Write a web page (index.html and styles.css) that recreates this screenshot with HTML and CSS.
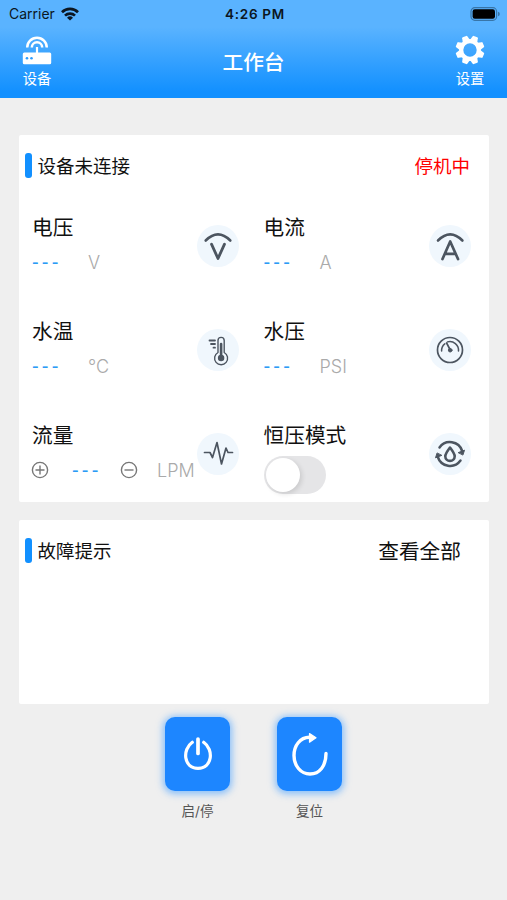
FILE: index.html
```html
<!DOCTYPE html>
<html lang="zh-CN">
<head>
    <meta charset="UTF-8">
    <meta name="viewport" content="width=device-width, initial-scale=1.0">
    <title>工作台</title>
    <link rel="stylesheet" href="styles.css">
</head>
<body>
    <header class="header">
        <div class="status-bar">
            <div class="carrier">
                <span>Carrier</span>
                <svg width="18" height="14" viewBox="0 0 18 14" fill="none" stroke="#0b1622" stroke-width="2.7">
                    <path d="M1 5.2a11.4 11.4 0 0 1 16 0M4 8.6a7.1 7.1 0 0 1 10 0"/>
                    <path d="M9 13.6 6 10.7a4.3 4.3 0 0 1 6 0z" fill="#0b1622" stroke="none"/>
                </svg>
            </div>
            <span class="time">4:26 PM</span>
            <svg class="battery" width="31" height="14" viewBox="0 0 31 14">
                <rect x="1" y=".7" width="25.6" height="12.6" rx="3.8" fill="none" stroke="#3875a8" stroke-width="1.2"/>
                <rect x="2.6" y="2.2" width="22.4" height="9.6" rx="2.2"/>
                <path d="M28 4.7v4.6q1.8-.6 1.8-2.3T28 4.7z" fill="#3875a8"/>
            </svg>
        </div>
        <nav class="nav-bar">
            <div class="nav-item">
                <svg width="30" height="30" viewBox="0 0 30 30" fill="none" stroke="#fff">
                    <path d="M5.2 12.5a9.8 9.8 0 0 1 19.6 0M9.8 12.5a5.2 5.2 0 0 1 10.4 0" stroke-width="2.5"/>
                    <path d="M15 12v7" stroke-width="2.2"/>
                    <rect x=".8" y="17.4" width="28.4" height="11.8" rx="1.5" fill="#fff" stroke="none"/>
                    <circle cx="5" cy="23.3" r="1.3" fill="#2c9cff" stroke="none"/>
                    <circle cx="9.5" cy="23.3" r="1.3" fill="#2c9cff" stroke="none"/>
                </svg>
                <span>设备</span>
            </div>
            <h1 class="title">工作台</h1>
            <div class="nav-item">
                <svg width="30" height="30" viewBox="-15 -15 30 30" fill="#fff">
                    <circle r="8.800" fill="none" stroke="#fff" stroke-width="4.200"/>
                    <g id="teeth">
                        <path id="tooth" d="M-3.800-9.500l1-4.300q.2-.7.900-.7h3.800q.7 0 .9.700l1 4.300z" transform="rotate(22.500)"/>
                        <use href="#tooth" transform="rotate(45)"/>
                        <use href="#tooth" transform="rotate(90)"/>
                        <use href="#tooth" transform="rotate(135)"/>
                    </g>
                    <use href="#teeth" transform="rotate(180)"/>
                </svg>
                <span>设置</span>
            </div>
        </nav>
    </header>

    <main class="main">
        <section class="card">
            <div class="card-head">
                <h2><span>设备未连接</span></h2>
                <span class="stopped">停机中</span>
            </div>
            <div class="metrics">
                <div class="metric">
                    <div>
                        <div class="name">电压</div>
                        <div class="reading"><span class="value">---</span><span class="unit">V</span></div>
                    </div>
                    <svg class="icon" viewBox="0 0 42 42">
                        <path d="M8.700 15.500q12.300-12.200 24.600 0" stroke-width="2.600"/>
                        <path d="M14.500 19.200 21 33.500l6.500-14.300" stroke-width="2.800"/>
                    </svg>
                </div>
                <div class="metric">
                    <div>
                        <div class="name">电流</div>
                        <div class="reading"><span class="value">---</span><span class="unit">A</span></div>
                    </div>
                    <svg class="icon" viewBox="0 0 42 42">
                        <path d="M9 15.500q12.200-12.200 24.400 0" stroke-width="2.600"/>
                        <path d="M13.500 34 21.200 16.500 29 34M16.500 28.800h9.600" stroke-width="2.700"/>
                    </svg>
                </div>
                <div class="metric">
                    <div>
                        <div class="name">水温</div>
                        <div class="reading"><span class="value">---</span><span class="unit">°C</span></div>
                    </div>
                    <svg class="icon" viewBox="0 0 42 42">
                        <path d="M21 23.500V11.500a3.100 3.100 0 0 1 6.200 0v12a6.500 6.500 0 1 1-6.200 0z" stroke-width="1.400"/>
                        <path d="M24.100 15v13" stroke-width="2.600"/>
                        <circle cx="24.100" cy="29" r="3.200" fill="#4c5560" stroke="none"/>
                        <path d="M12.500 11.500h5.500M14 15h4M16.500 18.700h1.500" stroke-width="1.800"/>
                    </svg>
                </div>
                <div class="metric">
                    <div>
                        <div class="name">水压</div>
                        <div class="reading"><span class="value">---</span><span class="unit">PSI</span></div>
                    </div>
                    <svg class="icon" viewBox="0 0 42 42">
                        <circle cx="21" cy="21" r="12.500" stroke-width="1.700"/>
                        <path d="M12.600 22a8.500 8.500 0 0 1 3.200-7.200M18.500 12.900a8.700 8.700 0 0 1 11 9.100" stroke-width="1.500"/>
                        <path d="M17.600 14 21 20.500" stroke-width="1.700"/>
                        <circle cx="21.200" cy="21.200" r="1.800" fill="#4c5560" stroke-width="1"/>
                    </svg>
                </div>
                <div class="metric">
                    <div>
                        <div class="name">流量</div>
                        <div class="reading stepper">
                            <svg width="18" height="18" viewBox="0 0 18 18"><circle cx="9" cy="9" r="7.600"/><path d="M4.500 9h9M9 4.500v9"/></svg>
                            <span class="value">---</span>
                            <svg width="18" height="18" viewBox="0 0 18 18"><circle cx="9" cy="9" r="7.600"/><path d="M4.500 9h9"/></svg>
                            <span class="unit">LPM</span>
                        </div>
                    </div>
                    <svg class="icon" viewBox="0 0 42 42">
                        <path d="M7.500 19.500h5.500l2.500 5 4.500-15 4.500 21.500 4.500-16 2 4.500h4.500" stroke-width="1.700"/>
                    </svg>
                </div>
                <div class="metric">
                    <div>
                        <div class="name">恒压模式</div>
                        <div class="switch"></div>
                    </div>
                    <svg class="icon" viewBox="0 0 42 42">
                        <path d="M10.500 14.500A12.900 12.900 0 0 1 33.200 18" stroke-width="2.500"/>
                        <path d="M31.500 27.500A12.900 12.900 0 0 1 8.800 24" stroke-width="2.500"/>
                        <path d="M29.500 19.500l6-2.300-1.500 4.500zM12.500 22.500l-6 2.300 1.500-4.500z" fill="#4c5560" stroke-width="1"/>
                        <path d="M21 14.500q-4.700 6.200-4.700 8.700a4.700 4.700 0 0 0 9.400 0q0-2.500-4.700-8.700z" stroke-width="2.600"/>
                    </svg>
                </div>
            </div>
        </section>

        <section class="card faults">
            <div class="card-head">
                <h2><span>故障提示</span></h2>
                <span class="view-all">查看全部</span>
            </div>
        </section>

        <div class="actions">
            <div class="action">
                <div class="button">
                    <svg width="36" height="40" viewBox="0 0 36 40">
                        <path d="M12.300 8.300C2 15.500 3.500 34.300 18 34.300S34 15.500 23.700 8.300" stroke-width="3.200"/>
                        <path d="M18 5v14.500" stroke-width="3.700"/>
                    </svg>
                </div>
                <span>启/停</span>
            </div>
            <div class="action">
                <div class="button">
                    <svg width="40" height="48" viewBox="0 0 40 48">
                        <path d="M36 23.500C36 36 29.500 44 20 44S4 35.500 4 25.500C4 15.500 10 7.500 19.500 7.300" stroke-width="3.400"/>
                        <path d="M19.500 3.500 26 7.800l-6.500 4.400z" fill="#fff" stroke-width="1.200"/>
                    </svg>
                </div>
                <span>复位</span>
            </div>
        </div>
    </main>
</body>
</html>
```

FILE: styles.css
```css
* {
    box-sizing: border-box;
}
body {
    margin: 0;
    background: #efefef;
    color: #111;
    font-family: Inter, "Noto Sans CJK SC", sans-serif;
}
svg {
    display: block;
    flex-shrink: 0;
}
h1, h2 {
    margin: 0;
    font-weight: 400;
}

/* header */
.header {
    height: 98px;
    background: linear-gradient(#5ab3ff 0, #5ab3ff 27px, #1290ff 92px);
}
.status-bar {
    height: 27px;
    padding: 0 6px 0 9px;
    display: grid;
    grid-template-columns: 1fr auto 1fr;
    align-items: center;
    color: #0b1622;
    font-size: 13.5px;
}
.carrier {
    display: flex;
    align-items: center;
    gap: 6px;
    font-size: 14px;
}
.time {
    font-weight: 600;
    letter-spacing: 0.7px;
}
.battery {
    justify-self: end;
}
.nav-bar {
    padding: 8px 22px 0;
    display: flex;
    justify-content: space-between;
    color: #fff;
}
.nav-item {
    display: flex;
    flex-direction: column;
    align-items: center;
    font-size: 14.3px;
    line-height: 20px;
    gap: 4px;
}
.title {
    font-size: 20.7px;
    font-weight: 500;
    line-height: 56px;
}

/* cards */
.main {
    padding: 37px 18px 0 19px;
}
.card {
    height: 367px;
    padding-top: 18px;
    background: #fff;
    border-radius: 2px;
}
.card-head {
    height: 25px;
    padding: 0 19px 0 6px;
    display: flex;
    align-items: center;
    justify-content: space-between;
}
.card-head h2 {
    display: flex;
    align-items: center;
    gap: 6px;
    font-size: 18.5px;
}
.card-head h2::before {
    content: "";
    width: 6.5px;
    height: 25px;
    border-radius: 3px;
    background: #1290ff;
}
.card-head span {
    padding-bottom: 2px;
}
.stopped {
    color: #f00;
    font-size: 18.5px;
}
.view-all {
    margin-right: 9px;
    font-size: 20.7px;
}
.faults {
    height: 184px;
    margin-top: 18px;
}

/* readings */
.metrics {
    padding: 19px 6px 0 13px;
    display: grid;
    grid-template-columns: 231.5px 1fr;
    grid-auto-rows: 104px;
}
.metric {
    display: flex;
    justify-content: space-between;
}
.metric:nth-child(odd) {
    padding-right: 25px;
}
.metric:nth-child(even) {
    padding-right: 12px;
}
.metric > div {
    width: 0;
    padding-top: 17px;
    white-space: nowrap;
}
.name {
    font-size: 20.7px;
    line-height: 28px;
}
.reading {
    height: 28px;
    margin-top: 6px;
    display: flex;
    align-items: center;
}
.value {
    flex: 0 0 56px;
    color: #2c9bf5;
    font-family: "Liberation Sans", sans-serif;
    font-size: 20px;
    letter-spacing: 3.2px;
}
.unit {
    color: #aaa;
    font-size: 18px;
    font-weight: 300;
}
.stepper svg {
    margin: 0 23px 0 -1px;
    fill: none;
    stroke: #777;
    stroke-width: 1.4;
}
.stepper .value {
    flex-basis: 49px;
}
.stepper svg + .unit {
    margin-left: -4px;
}
.icon {
    width: 42px;
    height: 42px;
    margin-top: 28px;
    border-radius: 50%;
    background: #f0f7fd;
    fill: none;
    stroke: #4c5560;
    stroke-linecap: round;
    stroke-linejoin: round;
}
.switch {
    width: 62px;
    height: 38px;
    margin-top: 6px;
    padding: 2px;
    border-radius: 19px;
    background: #e5e5e7;
}
.switch::before {
    content: "";
    display: block;
    width: 34px;
    height: 34px;
    border-radius: 50%;
    background: #fff;
    box-shadow: 2px 2px 5px rgba(0, 0, 0, 0.12);
}

/* bottom buttons */
.actions {
    padding: 13px 1px 0 0;
    display: flex;
    justify-content: center;
    gap: 47px;
}
.action {
    width: 65px;
    display: flex;
    flex-direction: column;
    align-items: center;
    gap: 10px;
    color: #555;
    font-size: 13.5px;
    line-height: 20px;
}
.button {
    width: 65px;
    height: 74px;
    display: flex;
    align-items: center;
    justify-content: center;
    border-radius: 10px;
    background: #1d86ff;
    box-shadow: 0 1px 7px 2px rgba(80, 165, 255, 0.65);
}
.button svg {
    fill: none;
    stroke: #fff;
    stroke-linecap: round;
    stroke-linejoin: round;
}
```
